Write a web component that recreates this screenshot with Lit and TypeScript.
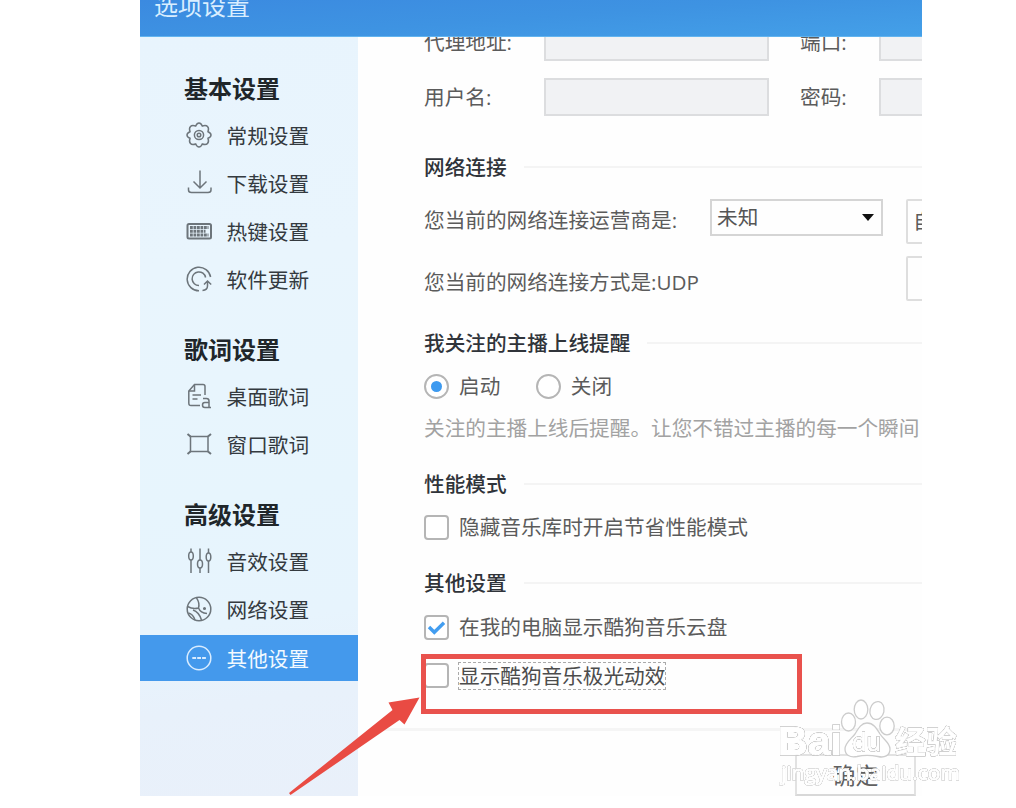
import { LitElement, html, css, svg, nothing } from 'lit';
import { customElement, property } from 'lit/decorators.js';
import { classMap } from 'lit/directives/class-map.js';

const icons: Record<string, unknown> = {
  gear: svg`
    <path d="M13 1 Q15 1 16.3 4 Q20 2.8 21.5 4.5 Q23.2 6 22 9.7 Q25 11 25 13 Q25 15 22 16.3 Q23.2 20 21.5 21.5 Q20 23.2 16.3 22 Q15 25 13 25 Q11 25 9.7 22 Q6 23.2 4.5 21.5 Q2.8 20 4 16.3 Q1 15 1 13 Q1 11 4 9.7 Q2.8 6 4.5 4.5 Q6 2.8 9.7 4 Q11 1 13 1 Z" />
    <circle cx="13" cy="13" r="4.6" />
    <circle cx="13" cy="13" r="1.8" />`,
  download: svg`
    <path d="M14 .5 V18 M7.5 11.5 L14 18 L20.5 11.5" />
    <path d="M2.5 17.5 V20 Q2.5 22.5 5.5 22.5 H22 Q25 22.5 25 20 V17.5" />`,
  keyboard: svg`
    <rect x="1.5" y="6" width="23.5" height="14.5" rx="1.5" stroke-width="2" />
    <path d="M4 9.5 H22.5 M4 13.3 H19.5 M4 17 H22.5" stroke-width="3" stroke-dasharray="2.8 .7" />`,
  update: svg`
    <path d="M13 24.8 A11.8 11.8 0 1 1 24.6 11" />
    <path d="M13 19.5 A6.8 6.8 0 1 1 19.6 11.5" />
    <path d="M16.5 24.5 Q21.5 24 21.5 20 V15.5 M18 18.5 L21.5 15 L25.2 18.5" />`,
  desktop: svg`
    <path d="M14 22.5 H5 Q2.8 22.5 2.8 20 V8 L8.5 1.5 H17 Q19 1.5 19 3.5 V12" />
    <path d="M3 8 H8.5 V2 M6.5 12 H15 M6.5 16 H11.5" />
    <path d="M17 15.5 H20.5 Q23 15.5 23 18 V24.5 H25 M23 19.5 H18.8 Q16.5 19.5 16.5 22 T18.8 24.5 H23" />`,
  frame: svg`
    <rect x="4.5" y="5.5" width="17.5" height="15" />
    <path d="M1.5 3 L4.5 5.5 M25 3 L22 5.5 M1.5 23 L4.5 20.5 M25 23 L22 20.5" stroke-width="2" />`,
  sliders: svg`
    <path d="M5 .5 V4 M5 12 V25 M14 .5 V12 M14 20 V25 M22.5 .5 V5 M22.5 13 V25" />
    <ellipse cx="5" cy="8" rx="2.3" ry="4" />
    <ellipse cx="14" cy="16" rx="2.5" ry="4" />
    <ellipse cx="22.5" cy="9" rx="2.3" ry="4" />`,
  globe: svg`
    <circle cx="13" cy="13" r="11.8" />
    <path d="M1.5 10.5 Q7 13.5 12.5 12 Q14 7 10.5 1.8 M12.5 12 Q14.5 17 21 17.5 M7 14 Q13 16 15.5 24 M2.5 17 Q7 18 9 24" />
    <circle cx="18.5" cy="12.5" r=".8" />`,
  more: svg`
    <circle cx="13" cy="13" r="11.8" />
    <path d="M6.3 13 H20" stroke-width="2.2" stroke-dasharray="3.8 1.1" />`,
};

const groups = [
  {
    title: '基本设置',
    items: [
      { icon: 'gear', label: '常规设置' },
      { icon: 'download', label: '下载设置' },
      { icon: 'keyboard', label: '热键设置' },
      { icon: 'update', label: '软件更新' },
    ],
  },
  {
    title: '歌词设置',
    items: [
      { icon: 'desktop', label: '桌面歌词' },
      { icon: 'frame', label: '窗口歌词' },
    ],
  },
  {
    title: '高级设置',
    items: [
      { icon: 'sliders', label: '音效设置' },
      { icon: 'globe', label: '网络设置' },
      { icon: 'more', label: '其他设置', active: true },
    ],
  },
];

@customElement('settings-sidebar')
export class SettingsSidebar extends LitElement {
  static styles = css`
    :host {
      display: block;
      box-sizing: border-box;
      padding-top: 28.5px;
      background: linear-gradient(172deg, #e8f4fd 0%, #e9f5fd 30%, #e7f5fd 60%, #e7f4fd 76%, #e8f1fb 86%, #e9f0fa 100%);
    }

    .group {
      margin-bottom: 25px;
    }

    .title {
      height: 46px;
      line-height: 46px;
      padding-left: 44px;
      font-size: 24px;
      font-weight: 700;
      color: #20262a;
    }

    .item {
      display: flex;
      align-items: center;
      gap: 14.5px;
      height: 46px;
      margin-bottom: 2.2px;
      padding-left: 46px;
      color: #343a3f;
    }

    .item span {
      padding-top: 2px;
    }

    .item.active {
      background: #4499ec;
      color: #f2f9ff;
    }

    svg {
      width: 26px;
      height: 26px;
      fill: none;
      stroke: #6d757b;
      stroke-width: 1.5;
    }

    .active svg {
      stroke: #d9ecff;
    }
  `;

  render() {
    return html`
      ${groups.map(
        (group) => html`
          <div class="group">
            <div class="title">${group.title}</div>
            ${group.items.map(
              (item: { icon: string; label: string; active?: boolean }) => html`
                <div class=${classMap({ item: true, active: !!item.active })}>
                  <svg viewBox="0 0 26 26">${icons[item.icon]}</svg>
                  <span>${item.label}</span>
                </div>
              `
            )}
          </div>
        `
      )}
    `;
  }
}

@customElement('section-title')
export class SectionTitle extends LitElement {
  static styles = css`
    :host {
      display: flex;
      align-items: center;
      gap: 17px;
      height: 30px;
      font-weight: 500;
      color: #30343a;
    }

    .line {
      flex: 1;
      height: 2px;
      background: #f4f4f4;
    }
  `;

  render() {
    return html`<slot></slot><div class="line"></div>`;
  }
}

@customElement('option-box')
export class OptionBox extends LitElement {
  static styles = css`
    :host {
      display: flex;
      align-items: center;
      gap: 10px;
      height: 26px;
    }

    .mark {
      display: flex;
      align-items: center;
      justify-content: center;
      box-sizing: border-box;
      width: 25px;
      height: 25px;
      border: 2px solid #b5b5b5;
      border-radius: 4px;
      background: #fff;
    }

    .mark.radio {
      border-radius: 50%;
    }

    .dot {
      width: 11px;
      height: 11px;
      border-radius: 50%;
      background: #3d9af0;
    }

    svg {
      width: 19px;
      height: 19px;
      fill: none;
      stroke: #429df0;
      stroke-width: 3.4;
    }

    .label {
      line-height: 26px;
    }

    .label.focused {
      outline: 1px dashed #aaa;
      color: #4c4c4c;
    }
  `;

  @property({ type: String })
  type: 'radio' | 'checkbox' = 'checkbox';

  @property({ type: Boolean })
  checked = false;

  @property({ type: Boolean })
  focused = false;

  renderMark() {
    if (!this.checked) return nothing;
    return this.type === 'radio'
      ? html`<div class="dot"></div>`
      : html`<svg viewBox="0 0 19 19"><path d="M2 9 L7.3 14.3 L17 4.8" /></svg>`;
  }

  render() {
    return html`
      <div class="mark ${this.type}">${this.renderMark()}</div>
      <span class=${classMap({ label: true, focused: this.focused })}><slot></slot></span>
    `;
  }
}

@customElement('baidu-watermark')
export class BaiduWatermark extends LitElement {
  static styles = css`
    :host {
      display: block;
      width: 190px;
      height: 100px;
    }

    svg {
      display: block;
    }

    .shape {
      fill: #fff;
      stroke: #cccccc;
      stroke-width: 1.3;
    }

    /* white letters with a thin grey edge */
    text {
      fill: #fff;
      stroke: #fff;
      stroke-width: 1.2;
      filter: drop-shadow(0 0 0.6px #777) drop-shadow(0 0 0.5px #bbb);
    }

    .brand {
      font: bold 40px 'Liberation Sans', sans-serif;
    }

    .du {
      font: 26px 'Open Sans', sans-serif;
      stroke-width: 1;
    }

    .cn {
      font: bold 31px 'Noto Sans CJK SC', sans-serif;
      stroke-width: 0.6;
    }

    .url {
      font: 20.5px 'Open Sans', sans-serif;
      stroke-width: 1;
      filter: drop-shadow(0 0 0.6px #999) drop-shadow(0 0 0.6px #ccc);
    }
  `;

  render() {
    return html`
      <svg width="190" height="100" viewBox="0 0 190 100">
        <ellipse class="shape" cx="73.5" cy="27" rx="7" ry="9" />
        <ellipse class="shape" cx="86" cy="14.5" rx="6.8" ry="9.5" />
        <ellipse class="shape" cx="102" cy="15.5" rx="7" ry="9" transform="rotate(12 102 15.5)" />
        <ellipse class="shape" cx="112" cy="31" rx="7.2" ry="8.8" />
        <path
          class="shape"
          d="M92 28 C99 28 102 34 105 39 C109 45 115 48 115 54 C115 61 109 63 103 61.5 C96 60 88 60 82 61.5 C75 63 70 60 70 54 C70 48 76 44 80 39 C83 34 86 28 92 28 Z"
        />
        <text class="brand" x="3" y="60" textLength="64" lengthAdjust="spacingAndGlyphs">Bai</text>
        <text class="du" x="77" y="56" textLength="29" lengthAdjust="spacingAndGlyphs">du</text>
        <text class="cn" x="120" y="58" textLength="62">经验</text>
        <text class="url" x="6" y="85" textLength="179" lengthAdjust="spacingAndGlyphs">jingyan.baidu.com</text>
      </svg>
    `;
  }
}

@customElement('app-root')
export class AppRoot extends LitElement {
  static styles = css`
    :host {
      display: block;
      position: relative;
      width: 1016px;
      height: 808px;
      overflow: hidden;
      background: #fff;
      font-family: 'Open Sans', 'Noto Sans CJK SC', sans-serif;
      font-size: 20.65px;
      line-height: 26px;
      white-space: nowrap;
      color: #5b5b5b;
    }

    .window {
      display: flex;
      flex-direction: column;
      width: 782px;
      height: 796px;
      margin-left: 140px;
      overflow: hidden;
      background: #fefefe;
    }

    .titlebar {
      flex: none;
      box-sizing: border-box;
      height: 37px;
      padding-left: 14px;
      overflow: hidden;
      background: linear-gradient(176deg, #3b8ae0 0%, #3e93e2 50%, #44a0e8 100%);
      border-bottom: 1px solid #62b4ef;
      font-size: 24px;
      line-height: 12px;
      color: #d9eeff;
    }

    .body {
      flex: 1;
      display: grid;
      grid-template-columns: 217.5px 1fr;
      min-height: 0;
    }

    .content {
      display: flex;
      flex-direction: column;
      min-width: 0;
      overflow: hidden;
    }

    .form {
      flex: none;
      height: 691px;
      box-sizing: border-box;
      padding-left: 66.5px;
      overflow: hidden;
    }

    .fields {
      display: grid;
      grid-template-columns: 120px 225px 31px 79px 80px;
      grid-template-rows: 38px 38px;
      row-gap: 17px;
      align-items: center;
      margin: -14px 0 36px;
    }

    .field {
      box-sizing: border-box;
      height: 38px;
      border: 2px solid #dcdddf;
      background: #f1f2f4;
    }

    .second {
      grid-column: 4;
    }

    .row {
      display: flex;
    }

    .text {
      flex: none;
    }

    .provider {
      height: 44px;
      margin-top: 17px;
      line-height: 43px;
    }

    .provider .text {
      width: 286px;
    }

    .select {
      flex: none;
      display: flex;
      align-items: center;
      justify-content: space-between;
      box-sizing: border-box;
      width: 173px;
      height: 37px;
      padding: 0 7px 0 5px;
      border: 2px solid #d5d5d5;
      line-height: 33px;
      color: #555;
    }

    .caret {
      width: 12px;
      height: 7px;
      background: #111;
      clip-path: polygon(0 0, 100% 0, 50% 100%);
    }

    .side-button {
      flex: none;
      box-sizing: border-box;
      width: 120px;
      height: 45px;
      padding-left: 5px;
      border: 2px solid #dedede;
      border-radius: 2px;
      line-height: 40px;
    }

    .provider .side-button {
      margin-left: 23px;
    }

    .mode {
      height: 46px;
      margin: 13px 0 26px;
      line-height: 52px;
    }

    .mode .text {
      width: 482px;
    }

    .radios {
      gap: 35.5px;
      margin: 15px 0 16px;
    }

    .hint {
      margin-bottom: 28px;
      color: #a2a2a2;
    }

    .power {
      margin: 15px 0 28px;
    }

    .cloud {
      margin: 16px 0 22.5px;
    }

    .footer {
      flex: 1;
      box-sizing: border-box;
      display: flex;
      justify-content: flex-end;
      margin-left: 25px;
      padding: 23px 6px 0 0;
      border-top: 3px solid #f5f5f5;
    }

    .confirm {
      box-sizing: border-box;
      width: 121px;
      height: 42px;
      border: 2px solid #e2e2e2;
      border-bottom-color: #d8d8d8;
      line-height: 38px;
      font-size: 23px;
      text-align: center;
      color: #606060;
    }

    .highlight {
      position: absolute;
      left: 421px;
      top: 654px;
      box-sizing: border-box;
      width: 381px;
      height: 60px;
      border: 5px solid #e9524d;
    }

    .arrow {
      position: absolute;
      left: 280px;
      top: 690px;
      fill: #e94b43;
    }

    baidu-watermark {
      position: absolute;
      left: 775px;
      top: 695px;
    }
  `;

  render() {
    return html`
      <div class="window">
        <div class="titlebar">选项设置</div>
        <div class="body">
          <settings-sidebar></settings-sidebar>
          <div class="content">
            <div class="form">
              <div class="fields">
                <span>代理地址:</span>
                <div class="field"></div>
                <span class="second">端口:</span>
                <div class="field"></div>
                <span>用户名:</span>
                <div class="field"></div>
                <span class="second">密码:</span>
                <div class="field"></div>
              </div>

              <section-title>网络连接</section-title>
              <div class="row provider">
                <span class="text">您当前的网络连接运营商是:</span>
                <div class="select"><span>未知</span><div class="caret"></div></div>
                <div class="side-button">自</div>
              </div>
              <div class="row mode">
                <span class="text">您当前的网络连接方式是:UDP</span>
                <div class="side-button"></div>
              </div>

              <section-title>我关注的主播上线提醒</section-title>
              <div class="row radios">
                <option-box type="radio" checked>启动</option-box>
                <option-box type="radio">关闭</option-box>
              </div>
              <div class="hint">关注的主播上线后提醒。让您不错过主播的每一个瞬间</div>

              <section-title>性能模式</section-title>
              <option-box class="power">隐藏音乐库时开启节省性能模式</option-box>

              <section-title>其他设置</section-title>
              <option-box class="cloud" checked>在我的电脑显示酷狗音乐云盘</option-box>
              <option-box focused>显示酷狗音乐极光动效</option-box>
            </div>
            <div class="footer">
              <div class="confirm">确定</div>
            </div>
          </div>
        </div>
      </div>
      <div class="highlight"></div>
      <svg class="arrow" width="145" height="108" viewBox="280 690 145 108">
        <path d="M419.5 697.5 L388.5 702.5 L392.5 710 L289 793 L290.5 795 L399.5 720 L404.5 724.5 Z" />
      </svg>
      <baidu-watermark></baidu-watermark>
    `;
  }
}
